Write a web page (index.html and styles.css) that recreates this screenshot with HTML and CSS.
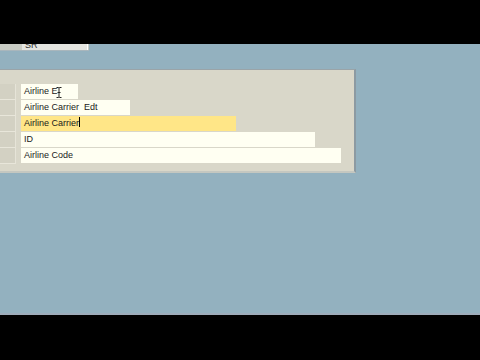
FILE: index.html
```html
<!DOCTYPE html>
<html lang="en">
<head>
    <meta charset="UTF-8">
    <title>Airline</title>
    <link rel="stylesheet" href="styles.css">
</head>
<body>
    <div id="screen">
        <div class="bar"></div>
        <div id="desk">
            <div class="tip">
                <div class="tip-box">SR</div>
            </div>
            <div id="panel">
                <ul class="rows">
                    <li><span class="lbl"></span><span class="fld w1">Airline E<svg class="ibeam" width="6" height="11" viewBox="0 0 6 11"><path d="M0.5 0.5h2l0.5 0.5l0.5-0.5h2M3 1v9M0.5 10.5h2l0.5-0.5l0.5 0.5h2M1.5 5.5h3" fill="none" stroke="#222" stroke-width="1"/></svg></span></li>
                    <li><span class="lbl"></span><span class="fld w2">Airline Carrier&nbsp; Edt</span></li>
                    <li><span class="lbl"></span><span class="fld w3 active">Airline Carrier<span class="caret"></span></span></li>
                    <li><span class="lbl"></span><span class="fld w4">ID</span></li>
                    <li><span class="lbl"></span><span class="fld w5">Airline Code</span></li>
                </ul>
            </div>
        </div>
        <div class="bar bottom"></div>
    </div>
</body>
</html>
```

FILE: styles.css
```css
*{
    margin: 0;
    padding: 0;
}
ul{
    list-style: none;
}
body{
    width: 480px;
    height: 360px;
    overflow: hidden;
    font-family: "Liberation Sans", Arial, sans-serif;
    font-size: 9px;
    color: #1a1a1a;
}
#screen{
    width: 480px;
    height: 360px;
    display: flex;
    flex-direction: column;
    background: #93b1bf;
}
.bar{
    height: 44px;
    background: #000000;
}
.bar.bottom{
    height: 45px;
    border-top: 2px solid #9eacba;
}
#desk{
    flex: 1;
    position: relative;
}
.tip{
    position: absolute;
    left: 0;
    top: 0;
    width: 89px;
    height: 6px;
    background: #c9ccc4;
    border-bottom: 1px solid #a9b6bc;
}
.tip-box{
    margin-left: 22px;
    width: 66px;
    height: 6px;
    box-sizing: border-box;
    background: #e4e5e0;
    border-right: 1px solid #ffffff;
    overflow: hidden;
    line-height: 2px;
    color: #333;
    font-size: 9px;
    padding-left: 3px;
}
#panel{
    position: absolute;
    left: 0;
    top: 25px;
    width: 356px;
    height: 104px;
    background: #d9d7c9;
    border-top: 1px solid #9aa4a8;
    border-right: 2px solid #8c9aa2;
    border-bottom: 2px solid #c4c7c0;
    padding-top: 14px;
    box-sizing: border-box;
}
.rows li{
    display: flex;
    height: 16px;
    align-items: stretch;
}
.lbl{
    width: 16px;
    background: #d3d1c3;
    border-right: 1px solid #e6e4d8;
    border-bottom: 1px solid #e8e6da;
    box-sizing: border-box;
    margin-right: 5px;
}
.fld{
    position: relative;
    height: 15px;
    background: #fffff2;
    line-height: 15px;
    padding-left: 3px;
    box-sizing: border-box;
    font-size: 9px;
    white-space: nowrap;
}
.w1{ width: 57px; }
.w2{ width: 109px; }
.w3{ width: 215px; }
.w4{ width: 294px; }
.w5{ width: 320px; }
.fld.active{
    background: #ffe687;
}
.ibeam{
    position: absolute;
    left: 35px;
    top: 3px;
}
.caret{
    display: inline-block;
    width: 1px;
    height: 10px;
    background: #000;
    vertical-align: -1px;
}
```
